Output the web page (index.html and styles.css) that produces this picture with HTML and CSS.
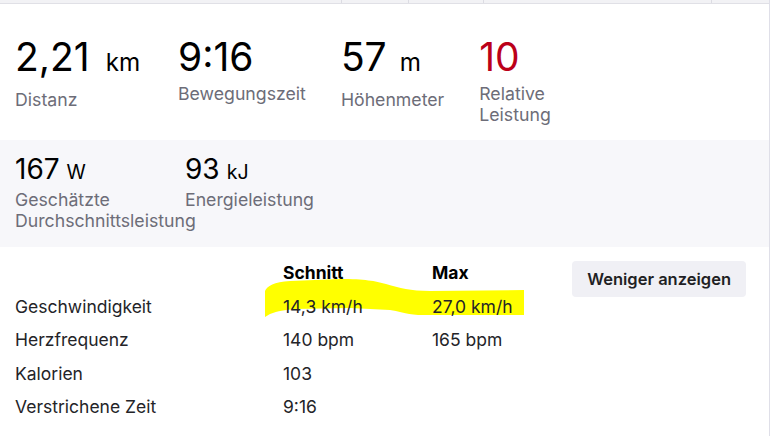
FILE: index.html
```html
<!DOCTYPE html>
<html lang="de">
<head>
<meta charset="utf-8">
<title>Aktivität</title>
<link rel="stylesheet" href="styles.css">
</head>
<body>
<div class="page">
  <svg class="highlight" width="770" height="436" viewBox="0 0 770 436" aria-hidden="true">
    <path d="M265,291 C267,286 274,282 290,281 L340,279 C365,279 375,281 386,284 C400,288 410,291 430,291 L524,290 L524,315 L418,315 C405,314 398,311 390,310 L350,308 L295,309 C285,310 278,311 270,314 L265,317 Z" fill="#ffff00"/>
  </svg>

  <div class="tabs">
    <span class="tab tab-a"></span>
    <span class="tab tab-b"></span>
    <span class="tab tab-c"></span>
    <span class="tab tab-d"></span>
    <span class="tab tab-e"></span>
  </div>

  <section class="primary">
    <ul class="stats">
      <li class="stat stat-first">
        <div class="value">2,21<span class="unit unit-km">km</span></div>
        <div class="label">Distanz</div>
      </li>
      <li class="stat">
        <div class="value">9:16</div>
        <div class="label">Bewegungszeit</div>
      </li>
      <li class="stat">
        <div class="value">57<span class="unit">m</span></div>
        <div class="label">Höhenmeter</div>
      </li>
      <li class="stat">
        <div class="value value-effort">10</div>
        <div class="label">Relative Leistung</div>
      </li>
    </ul>
  </section>

  <section class="secondary">
    <ul class="stats">
      <li class="stat">
        <div class="value value-small">167<span class="unit">W</span></div>
        <div class="label label-tight">Geschätzte Durchschnittsleistung</div>
      </li>
      <li class="stat">
        <div class="value value-small">93<span class="unit">kJ</span></div>
        <div class="label label-tight">Energieleistung</div>
      </li>
    </ul>
  </section>

  <section class="details">
    <div class="table">
      <div class="cell"></div>
      <div class="cell head">Schnitt</div>
      <div class="cell head">Max</div>

      <div class="cell">Geschwindigkeit</div>
      <div class="cell">14,3 km/h</div>
      <div class="cell">27,0 km/h</div>

      <div class="cell">Herzfrequenz</div>
      <div class="cell">140 bpm</div>
      <div class="cell">165 bpm</div>

      <div class="cell">Kalorien</div>
      <div class="cell">103</div>
      <div class="cell"></div>

      <div class="cell">Verstrichene Zeit</div>
      <div class="cell">9:16</div>
      <div class="cell"></div>
    </div>
    <button class="toggle" type="button">Weniger anzeigen</button>
  </section>
  <div class="rule"></div>
</div>
</body>
</html>
```

FILE: styles.css
```css
html, body {
  margin: 0;
  padding: 0;
  background: #ffffff;
}

body {
  font-family: Inter, "Noto Sans", "Liberation Sans", sans-serif;
  color: #242428;
}

.page {
  position: relative;
  box-sizing: border-box;
  width: 770px;
  min-height: 436px;
  border-right: 1px solid #dfdfe8;
}

.highlight {
  position: absolute;
  left: 0;
  top: 0;
  z-index: 2;
  pointer-events: none;
}

.tabs {
  display: flex;
  height: 3px;
  background: #f2f2f5;
  border-bottom: 1px solid #e0e0e6;
}

.tab {
  box-sizing: border-box;
  border-right: 1px solid #dcdce3;
}

.tab-a { width: 342px; }
.tab-b { width: 67px; }
.tab-c { width: 75px; }
.tab-d { width: 228px; }
.tab-e { flex: 1; border-right: none; }

.stats {
  display: flex;
  gap: 35px;
  margin: 0;
  padding: 0;
  list-style: none;
}

.stat {
  max-width: 135px;
}

.stat-first {
  min-width: 128px;
}

.primary {
  padding: 33px 15px 15px;
}

.value {
  font-size: 39px;
  line-height: 40px;
  color: #000000;
  white-space: nowrap;
}

.value .unit {
  font-size: 0.62em;
  margin-left: 13px;
}

.value .unit-km {
  margin-left: 16px;
}

.value-small {
  font-size: 28px;
  line-height: 30px;
}

.value-small .unit {
  font-size: 0.7em;
  margin-left: 7px;
}

.value-effort {
  color: #bb0019;
}

.label {
  margin-top: 6px;
  font-size: 17.7px;
  line-height: 21px;
  color: #6d6d78;
}

.label-tight {
  margin-top: 2px;
}

.secondary {
  background: #f7f7fa;
  padding: 14px 15px 16px;
}

.details {
  position: relative;
  z-index: 3;
  display: flex;
  align-items: flex-start;
  padding: 9px 23px 0 15px;
}

.table {
  display: grid;
  grid-template-columns: 268px 149px 130px;
  font-size: 17.5px;
  line-height: 33.5px;
  color: #242428;
}

.cell {
  white-space: nowrap;
}

.head {
  font-weight: 700;
  color: #000000;
}

.toggle {
  margin-left: auto;
  margin-top: 5px;
  height: 36px;
  padding: 0 15px;
  border: none;
  border-radius: 4px;
  background: #f0f0f5;
  font-family: Inter, "Noto Sans", "Liberation Sans", sans-serif;
  font-size: 16.5px;
  font-weight: 600;
  color: #1f1f24;
}

.rule {
  height: 1px;
  margin: 14px 20px 0 14px;
  background: #dfdfe8;
}
```
